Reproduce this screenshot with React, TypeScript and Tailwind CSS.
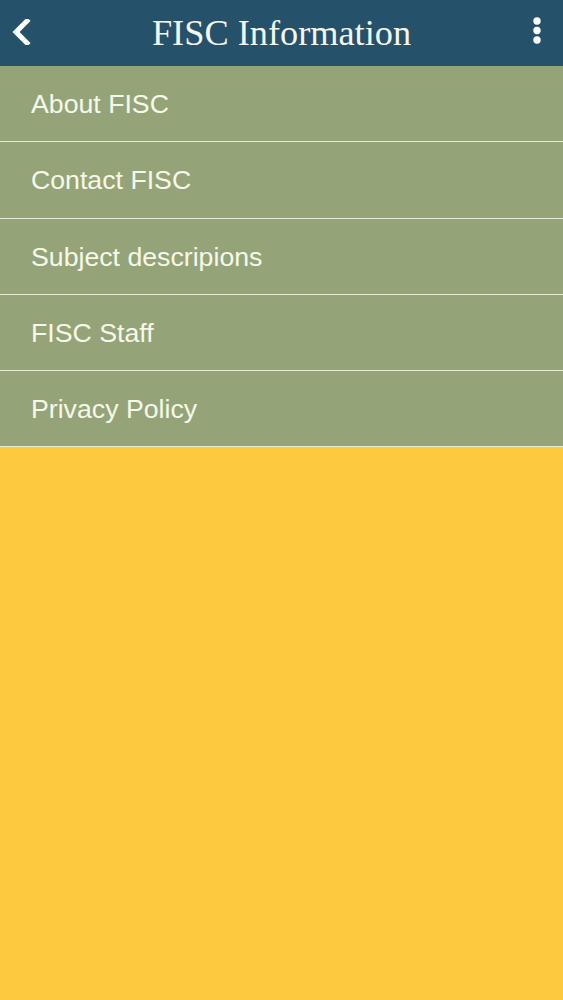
const items = [
  "About FISC",
  "Contact FISC",
  "Subject descripions",
  "FISC Staff",
  "Privacy Policy",
];

export default function App() {
  return (
    <div className="w-full h-[1000px] flex flex-col bg-[#fdc93f]">
      <div className="h-[66px] bg-[#25516b] grid grid-cols-[60px_1fr_60px] items-center shrink-0">
        <svg width="20" height="26" viewBox="0 0 20 26" className="ml-[12px] mt-[-2px]">
          <path
            d="M15 2 L4 13 L15 24"
            fill="none"
            stroke="#fff"
            strokeWidth="5"
            strokeLinecap="square"
            strokeLinejoin="miter"
          />
        </svg>
        <h1
          className="text-[36.3px] text-[#f4f6ec] leading-none mt-[1px] text-center"
          style={{ fontFamily: '"Liberation Serif", Georgia, serif' }}
        >
          FISC Information
        </h1>
        <svg width="10" height="30" viewBox="0 0 10 30" className="ml-[29px] mt-[-5px]">
          <circle cx="5" cy="5" r="3.7" fill="#fff" />
          <circle cx="5" cy="14.5" r="3.7" fill="#fff" />
          <circle cx="5" cy="24" r="3.7" fill="#fff" />
        </svg>
      </div>
      <div className="bg-[#95a478]">
        {items.map((item) => (
          <div
            key={item}
            className="h-[76.25px] border-b-[1.5px] border-[#e6ecd6] flex items-center pl-[31px]"
          >
            <span
              className="text-[26.7px] text-[#f6f8ea] mt-[1px]"
              style={{ fontFamily: '"Liberation Sans", Arial, sans-serif' }}
            >
              {item}
            </span>
          </div>
        ))}
      </div>
    </div>
  );
}
